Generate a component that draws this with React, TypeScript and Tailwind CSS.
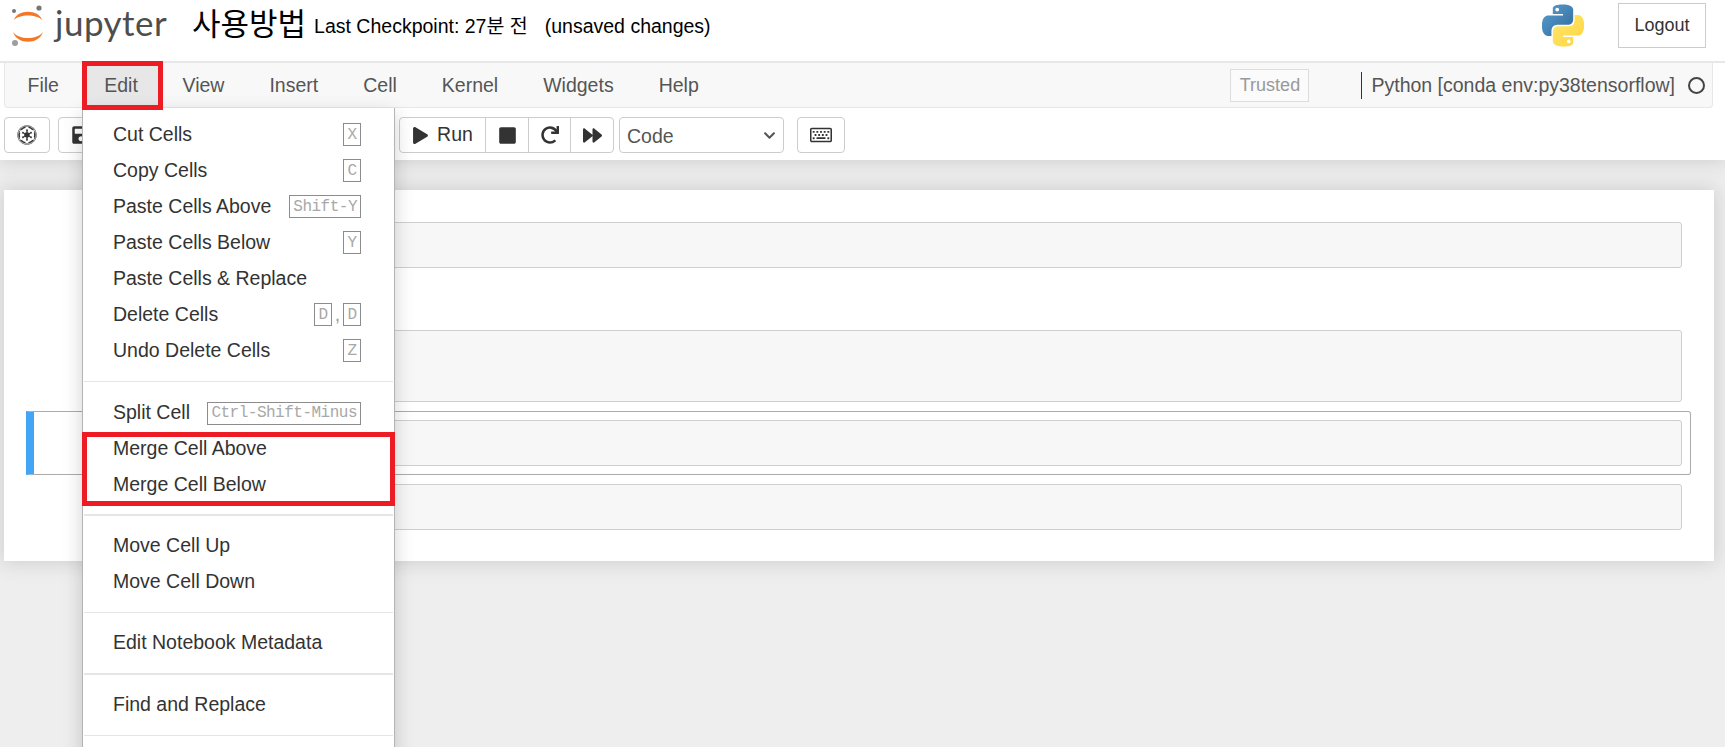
import { ReactNode } from "react";
import {
  FaArrowDown,
  FaArrowUp,
  FaChevronDown,
  FaCopy,
  FaCut,
  FaEmpire,
  FaForward,
  FaPaste,
  FaPlay,
  FaPlus,
  FaRedo,
  FaRegKeyboard,
  FaSave,
  FaStop,
} from "react-icons/fa";

const menus = ["View", "Insert", "Cell", "Kernel", "Widgets", "Help"];

function JupyterLogo() {
  return (
    <div className="flex items-center w-[165px]">
      <svg width="40" height="44" viewBox="0 0 40 44" className="shrink-0">
        <path d="M6 16C9 5 31 5 34 16C29 10 11 10 6 16Z" fill="#f37726" />
        <path d="M5 28C11 36 29 36 35 28C31 41 9 41 5 28Z" fill="#f37726" />
        <circle cx="31" cy="4" r="2.6" fill="#767677" />
        <circle cx="6" cy="7" r="2" fill="#767677" />
        <circle cx="7" cy="39" r="3" fill="#9e9e9e" />
      </svg>
      <span className="ml-[7px] text-[35px] leading-none tracking-[0.5px] text-[#4e4e4e] font-['Lato',sans-serif] -mt-[7px]">
        jupyter
      </span>
    </div>
  );
}

function PythonLogo() {
  return (
    <svg width="42" height="43" viewBox="0 0 24 24" fillRule="evenodd">
      <defs>
        <linearGradient id="pyBlue" x1="0" y1="0" x2="1" y2="1">
          <stop offset="0" stopColor="#5a9fd4" />
          <stop offset="1" stopColor="#306998" />
        </linearGradient>
        <linearGradient id="pyYellow" x1="0" y1="0" x2="1" y2="1">
          <stop offset="0" stopColor="#ffe873" />
          <stop offset="1" stopColor="#ffd43b" />
        </linearGradient>
      </defs>
      <path
        fill="url(#pyBlue)"
        d="M14.25.18l.9.2.73.26.59.3.45.32.34.34.25.34.16.33.1.3.04.26.02.2-.01.13V8.5l-.05.63-.13.55-.21.46-.26.38-.3.31-.33.25-.35.19-.35.14-.33.1-.3.07-.26.04-.21.02H8.77l-.69.05-.59.14-.5.22-.41.27-.33.32-.27.35-.2.36-.15.37-.1.35-.07.32-.04.27-.02.21v3.06H3.17l-.21-.03-.28-.07-.32-.12-.35-.18-.36-.26-.36-.36-.35-.46-.32-.59-.28-.73-.21-.88-.14-1.05-.05-1.23.06-1.22.16-1.04.24-.87.32-.71.36-.57.4-.44.42-.33.42-.24.4-.16.36-.1.32-.05.24-.01h.16l.06.01h8.16v-.83H6.18l-.01-2.75-.02-.37.05-.34.11-.31.17-.28.25-.26.31-.23.38-.2.44-.18.51-.15.58-.12.64-.1.71-.06.77-.04.84-.02 1.27.05zM7.95 2.16l-.23.33-.08.41.08.41.23.34.33.22.41.09.41-.09.33-.22.23-.34.08-.41-.08-.41-.23-.33-.33-.22-.41-.09-.41.09z"
      />
      <path
        fill="url(#pyYellow)"
        d="M21.04 6.11l.28.06.32.12.35.18.36.27.36.35.35.47.32.59.28.73.21.88.14 1.04.05 1.23-.06 1.23-.16 1.04-.24.86-.32.71-.36.57-.4.45-.42.33-.42.24-.4.16-.36.09-.32.05-.24.02-.16-.01h-8.22v.82h5.84l.01 2.76.02.36-.05.34-.11.31-.17.29-.25.25-.31.24-.38.2-.44.17-.51.15-.58.13-.64.09-.71.07-.77.04-.84.01-1.27-.04-1.07-.14-.9-.2-.73-.25-.59-.3-.45-.33-.34-.34-.25-.34-.16-.33-.1-.3-.04-.25-.02-.2.01-.13v-5.34l.05-.64.13-.54.21-.46.26-.38.3-.32.33-.24.35-.2.35-.14.33-.1.3-.06.26-.04.21-.02.13-.01h5.84l.69-.05.59-.14.5-.21.41-.28.33-.32.27-.35.2-.36.15-.36.1-.35.07-.32.04-.28.02-.21V6.07h2.09l.14.01zM14.57 20.36l-.23.33-.08.41.08.41.23.33.33.23.41.08.41-.08.33-.23.23-.33.08-.41-.08-.41-.23-.33-.33-.23-.41-.08-.41.08z"
      />
    </svg>
  );
}

function Kbd(props: { children: ReactNode }) {
  return (
    <span className="inline-flex items-center justify-center h-[23px] min-w-[18px] px-[3px] border border-[#8c8c8c] font-['Liberation_Mono',monospace] text-[16px] tracking-[-0.5px] leading-none text-[#a8a8a8]">
      {props.children}
    </span>
  );
}

function MenuRow(props: { label: string; children?: ReactNode }) {
  return (
    <div className="flex items-center justify-between h-9 pl-[30px] pr-[33px]">
      <span>{props.label}</span>
      {props.children && <span className="flex items-center">{props.children}</span>}
    </div>
  );
}

function Divider(props: { className?: string }) {
  return <div className={`h-[1.5px] bg-[#e5e5e5] mt-3 mx-px ${props.className ?? "mb-3"}`} />;
}

function EditDropdown() {
  return (
    <div className="absolute z-30 top-full left-0 w-[313px] pt-[9px] bg-white border border-[#b4b4b4] border-t-0 text-[#333] shadow-[0_6px_18px_rgba(0,0,0,0.18)]">
      <MenuRow label="Cut Cells"><Kbd>X</Kbd></MenuRow>
      <MenuRow label="Copy Cells"><Kbd>C</Kbd></MenuRow>
      <MenuRow label="Paste Cells Above"><Kbd>Shift-Y</Kbd></MenuRow>
      <MenuRow label="Paste Cells Below"><Kbd>Y</Kbd></MenuRow>
      <MenuRow label="Paste Cells &amp; Replace" />
      <MenuRow label="Delete Cells">
        <Kbd>D</Kbd>
        <span className="w-[11px] text-center text-[#a0a0a0]">,</span>
        <Kbd>D</Kbd>
      </MenuRow>
      <MenuRow label="Undo Delete Cells"><Kbd>Z</Kbd></MenuRow>
      <Divider className="mb-[13px]" />
      <MenuRow label="Split Cell"><Kbd>Ctrl-Shift-Minus</Kbd></MenuRow>
      <div className="relative">
        <MenuRow label="Merge Cell Above" />
        <MenuRow label="Merge Cell Below" />
        <div className="absolute -left-px -right-px top-[1px] -bottom-[3px] border-[5px] border-[#ed1c24]" />
      </div>
      <Divider className="mb-[11px] -translate-y-px" />
      <MenuRow label="Move Cell Up" />
      <MenuRow label="Move Cell Down" />
      <Divider />
      <MenuRow label="Edit Notebook Metadata" />
      <Divider />
      <MenuRow label="Find and Replace" />
      <Divider />
      <div className="h-9" />
    </div>
  );
}

function MenuBar() {
  return (
    <div className="mx-1 w-[1709px] h-[45px] flex items-center bg-[#f8f8f8] border border-t-0 border-[#e7e7e7] rounded-b-[4px] text-[19.5px] text-[#555]">
      <div className="px-[22.5px] pt-[2px]">File</div>
      <div className="relative h-[45px] w-[81px] ml-[0.6px] -mr-[3px] pr-[3px] pt-[2px] flex items-center justify-center bg-[#e7e7e7]">
        Edit
        <div className="absolute z-40 inset-x-0 -top-[2px] -bottom-[2px] border-[5px] border-[#ed1c24]" />
        <EditDropdown />
      </div>
      {menus.map((m) => (
        <div key={m} className="px-[22.5px] pt-[2px]">
          {m}
        </div>
      ))}
      <div className="ml-auto w-[79px] h-[33px] flex items-center justify-center border border-[#ddd] bg-white/40 text-[18px] text-[#999]">
        Trusted
      </div>
      <div className="ml-[52px] h-[27px] border-l border-[#333]" />
      <div className="ml-[9px] pt-[2px]">Python [conda env:py38tensorflow]</div>
      <div className="ml-[13px] mr-[7px] w-[17px] h-[17px] rounded-full border-[2.5px] border-[#444]" />
    </div>
  );
}

function ToolButton(props: { children: ReactNode; w: string }) {
  return (
    <div className={`h-full flex items-center justify-center border-l border-[#ccc] first:border-l-0 ${props.w}`}>
      {props.children}
    </div>
  );
}

function ToolGroup(props: { children: ReactNode }) {
  return (
    <div className="h-9 flex border border-[#ccc] rounded-[4px] bg-white text-[#333] text-[19.5px]">
      {props.children}
    </div>
  );
}

function Toolbar() {
  return (
    <div className="h-[52px] px-1 pt-[9px] flex items-start gap-2 bg-white">
      <ToolGroup>
        <ToolButton w="w-[44px]"><FaEmpire size={20} /></ToolButton>
      </ToolGroup>
      <ToolGroup>
        <ToolButton w="w-[43px]"><FaSave size={20} /></ToolButton>
      </ToolGroup>
      <ToolGroup>
        <ToolButton w="w-[43px]"><FaPlus size={18} /></ToolButton>
      </ToolGroup>
      <ToolGroup>
        <ToolButton w="w-[41px]"><FaCut size={18} /></ToolButton>
        <ToolButton w="w-[41px]"><FaCopy size={18} /></ToolButton>
        <ToolButton w="w-[41px]"><FaPaste size={18} /></ToolButton>
      </ToolGroup>
      <ToolGroup>
        <ToolButton w="w-[46px]"><FaArrowUp size={18} /></ToolButton>
        <ToolButton w="w-[46px]"><FaArrowDown size={18} /></ToolButton>
      </ToolGroup>
      <ToolGroup>
        <ToolButton w="w-[85px]">
          <FaPlay size={17} className="mr-2" />
          Run
        </ToolButton>
        <ToolButton w="w-[43px]"><FaStop size={19} /></ToolButton>
        <ToolButton w="w-[42px]"><FaRedo size={18} /></ToolButton>
        <ToolButton w="w-[43px]"><FaForward size={19} /></ToolButton>
      </ToolGroup>
      <div className="-ml-[3px] w-[165px] h-9 flex items-center justify-between pl-[7px] pr-[7px] border border-[#ccc] rounded-[4px] text-[19.5px] text-[#555]">
        <span className="pt-[4px]">Code</span>
        <FaChevronDown size={13} />
      </div>
      <div className="ml-[5px]">
        <ToolGroup>
          <ToolButton w="w-[46px]"><FaRegKeyboard size={22} /></ToolButton>
        </ToolGroup>
      </div>
    </div>
  );
}

function Cell(props: { h: string; selected?: boolean }) {
  const outer = props.selected
    ? "border-[#ababab] border-l-8 border-l-[#42a5f5] rounded-r-[3px]"
    : "border-transparent border-l-8";
  return (
    <div className={`p-2 border ${outer}`}>
      <div className={`ml-[100px] bg-[#f7f7f7] border-[1.5px] border-[#cfcfcf] rounded-[3px] ${props.h}`} />
    </div>
  );
}

export default function App() {
  return (
    <div className="relative h-[747px] overflow-hidden bg-[#eeeeee] font-['Liberation_Sans','Noto_Sans_CJK_KR',sans-serif]">
      <div className="relative z-10 bg-white shadow-[0_0_18px_2px_rgba(87,87,87,0.2)]">
        <header className="h-[61px] flex items-center pl-2 pr-[19px] pb-[10px] text-black">
          <JupyterLogo />
          <span className="ml-[19px] text-[31px] leading-none -mt-[2px]">사용방법</span>
          <span className="ml-[8px] text-[19.5px] leading-none pt-[3px]">Last Checkpoint: 27분 전</span>
          <span className="ml-[17px] text-[19.5px] leading-none pt-[3px]">(unsaved changes)</span>
          <div className="ml-auto flex items-center gap-[34px]">
            <PythonLogo />
            <div className="w-[88px] h-[45px] flex items-center justify-center border border-[#ccc] text-[18px] text-[#333]">
              Logout
            </div>
          </div>
        </header>
        <div className="h-[2px] bg-[#e7e7e7]" />
        <MenuBar />
        <Toolbar />
      </div>
      <main className="relative mt-[30px] ml-1 w-[1710px] h-[371px] pt-[23px] pl-[22px] bg-white shadow-[0_0_18px_2px_rgba(87,87,87,0.2)]">
        <div className="w-[1665px]">
          <Cell h="h-[46px]" />
          <div className="h-[44px]" />
          <Cell h="h-[72px]" />
          <Cell h="h-[46px]" selected />
          <Cell h="h-[46px]" />
        </div>
      </main>
    </div>
  );
}
